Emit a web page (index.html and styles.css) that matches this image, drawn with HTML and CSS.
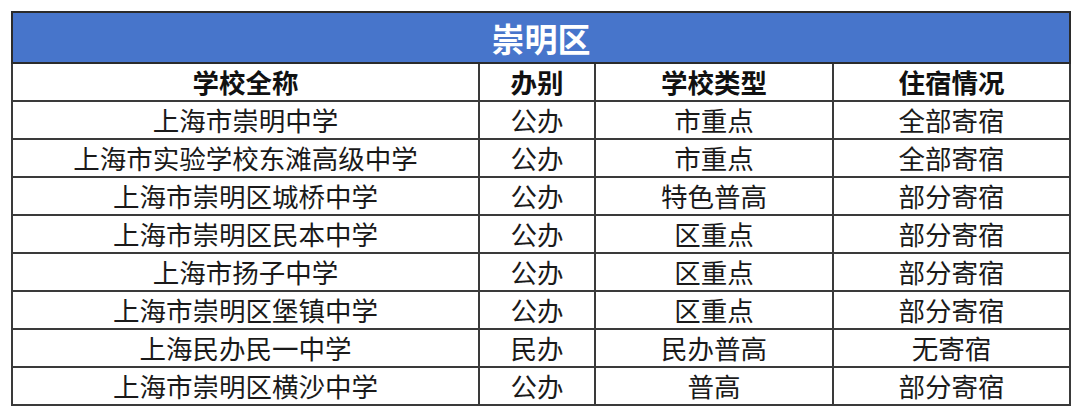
FILE: index.html
```html
<!DOCTYPE html>
<html lang="zh-CN">
<head>
<meta charset="utf-8">
<title>崇明区</title>
<link rel="stylesheet" href="styles.css">
</head>
<body>
<table class="schools">
  <colgroup>
    <col class="c-name">
    <col class="c-run">
    <col class="c-type">
    <col class="c-board">
  </colgroup>
  <thead>
    <tr class="title-row"><th colspan="4">崇明区</th></tr>
    <tr class="head-row"><th>学校全称</th><th>办别</th><th>学校类型</th><th>住宿情况</th></tr>
  </thead>
  <tbody>
    <tr><td>上海市崇明中学</td><td>公办</td><td>市重点</td><td>全部寄宿</td></tr>
    <tr><td>上海市实验学校东滩高级中学</td><td>公办</td><td>市重点</td><td>全部寄宿</td></tr>
    <tr><td>上海市崇明区城桥中学</td><td>公办</td><td>特色普高</td><td>部分寄宿</td></tr>
    <tr><td>上海市崇明区民本中学</td><td>公办</td><td>区重点</td><td>部分寄宿</td></tr>
    <tr><td>上海市扬子中学</td><td>公办</td><td>区重点</td><td>部分寄宿</td></tr>
    <tr><td>上海市崇明区堡镇中学</td><td>公办</td><td>区重点</td><td>部分寄宿</td></tr>
    <tr><td>上海民办民一中学</td><td>民办</td><td>民办普高</td><td>无寄宿</td></tr>
    <tr><td>上海市崇明区横沙中学</td><td>公办</td><td>普高</td><td>部分寄宿</td></tr>
  </tbody>
</table>
</body>
</html>
```

FILE: styles.css
```css
html, body {
  margin: 0;
  padding: 0;
  background: #ffffff;
}

body {
  padding: 11px 0 0 11px;
  font-family: "Noto Sans CJK SC", "Noto Sans", sans-serif;
  color: #1a1a1a;
}

.schools {
  border-collapse: collapse;
  table-layout: fixed;
  width: 1058px;
  border: 2px solid #2b2b2b;
}

.c-name { width: 467px; }
.c-run { width: 116px; }
.c-type { width: 238px; }
.c-board { width: 237px; }

.schools th,
.schools td {
  border: 2px solid #3a3a3a;
  padding: 0;
  text-align: center;
  vertical-align: middle;
  font-size: 26.5px;
  line-height: 30px;
  white-space: nowrap;
}

.title-row th {
  height: 49px;
  background: #4775cb;
  color: #ffffff;
  font-size: 33px;
  font-weight: 700;
  border-color: #2b2b2b;
}

.head-row th {
  height: 36px;
  font-weight: 700;
  color: #111111;
}

.schools td {
  height: 36px;
  font-weight: 400;
}
```
